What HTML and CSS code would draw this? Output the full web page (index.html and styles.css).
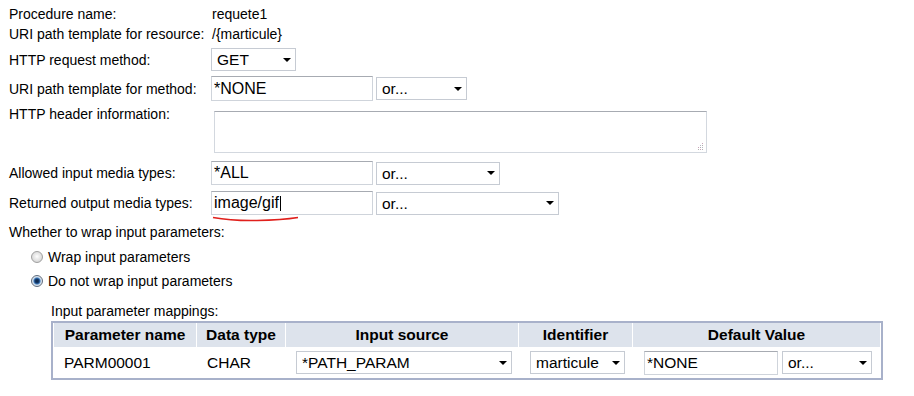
FILE: index.html
```html
<!DOCTYPE html>
<html>
<head>
<meta charset="utf-8">
<link rel="stylesheet" href="styles.css">
</head>
<body>
<div class="page">
  <div class="row r1"><span class="label">Procedure name:</span><span class="val">requete1</span></div>
  <div class="row r2"><span class="label">URI path template for resource:</span><span class="val">/{marticule}</span></div>
  <div class="row r3"><span class="label">HTTP request method:</span><span class="sel s-get"><select><option>GET</option></select></span></div>
  <div class="row r4"><span class="label">URI path template for method:</span><input class="inp" value="*NONE"><span class="sel s-or1"><select><option>or...</option></select></span></div>
  <div class="row r5"><span class="label lt">HTTP header information:</span><span class="tawrap"><textarea class="ta"></textarea><svg class="grip" width="7" height="7" viewBox="0 0 7 7"><rect x="5" y="0" width="1" height="1" fill="#c9a3b8"/><rect x="3" y="2" width="1" height="1" fill="#b8b8c8"/><rect x="5" y="2" width="1" height="1" fill="#b0b0b0"/><rect x="1" y="4" width="1" height="1" fill="#c9a3b8"/><rect x="3" y="4" width="1" height="1" fill="#b0b0b0"/><rect x="5" y="4" width="1" height="1" fill="#b8b8c8"/><rect x="1" y="6" width="1" height="1" fill="#b0b0b0"/><rect x="3" y="6" width="1" height="1" fill="#c9a3b8"/><rect x="5" y="6" width="1" height="1" fill="#b0b0b0"/></svg></span></div>
  <div class="row r6"><span class="label">Allowed input media types:</span><input class="inp" value="*ALL"><span class="sel s-or2"><select><option>or...</option></select></span></div>
  <div class="row r7"><span class="label">Returned output media types:</span><span class="spell"><input class="inp" value="image/gif"><span class="caret"></span><svg class="squiggle" width="90" height="6" viewBox="0 0 90 6"><path d="M1 1.5 Q 20 5 45 4.5 T 86 1.5" fill="none" stroke="#e0201c" stroke-width="1.6"/></svg></span><span class="sel s-or3"><select><option>or...</option></select></span></div>
  <div class="row r8"><span>Whether to wrap input parameters:</span></div>
  <div class="row r9 opt"><span class="radio"></span><span>Wrap input parameters</span></div>
  <div class="row r10 opt"><span class="radio checked"></span><span>Do not wrap input parameters</span></div>
  <div class="mapping">
    <div class="mlabel">Input parameter mappings:</div>
    <div class="ptable">
      <div class="th">Parameter name</div>
      <div class="th">Data type</div>
      <div class="th">Input source</div>
      <div class="th">Identifier</div>
      <div class="th">Default Value</div>
      <div class="td">PARM00001</div>
      <div class="td">CHAR</div>
      <div class="td"><span class="sel s-src"><select><option>*PATH_PARAM</option></select></span></div>
      <div class="td"><span class="sel s-id"><select><option>marticule</option></select></span></div>
      <div class="td"><input class="inp i-def" value="*NONE"><span class="sel s-or4"><select><option>or...</option></select></span></div>
    </div>
  </div>
</div>
</body>
</html>
```
FILE: styles.css
```css
html, body {
  margin: 0;
  padding: 0;
  background: #fff;
}
body {
  font-family: "Liberation Sans", Arial, sans-serif;
  font-size: 14px;
  color: #000;
  width: 914px;
  height: 396px;
  overflow: hidden;
}
.page {
  padding: 4px 0 0 9px;
  display: flex;
  flex-direction: column;
}
.row {
  display: flex;
  align-items: center;
  line-height: 16px;
}
.label {
  width: 202px;
  flex: none;
}
.val {
  margin-left: 1px;
}
.r1 { height: 19px; }
.r2 { height: 21px; }
.r3 { height: 31px; }
.r4 { height: 27px; }
.r5 { height: 56px; align-items: flex-start; }
.r6 { height: 30px; }
.r7 { height: 30px; }
.r8 { height: 28px; }
.r9 { height: 22px; }
.r10 { height: 26px; }
.lt { padding-top: 4px; }

.inp {
  box-sizing: border-box;
  width: 162px;
  height: 24px;
  margin: 0;
  padding: 0 2px;
  border: 1px solid #cfd4db;
  border-top-color: #a7abb2;
  border-radius: 0;
  font-family: "Liberation Sans", Arial, sans-serif;
  font-size: 16px;
  color: #000;
  background: #fff;
  outline: none;
}
.r4 .inp { height: 25px; }

.sel {
  position: relative;
  display: inline-block;
  height: 23px;
  flex: none;
}
.sel select {
  -webkit-appearance: none;
  appearance: none;
  box-sizing: border-box;
  width: 100%;
  height: 100%;
  margin: 0;
  padding: 0 0 0 5px;
  border: 1px solid #c6cbd3;
  border-radius: 0;
  background: #fff;
  font-family: "Liberation Sans", Arial, sans-serif;
  font-size: 15.5px;
  color: #000;
  outline: none;
}
.sel::after {
  content: "";
  position: absolute;
  right: 5px;
  top: 50%;
  margin-top: -2px;
  border-left: 4px solid transparent;
  border-right: 4px solid transparent;
  border-top: 4px solid #000;
  pointer-events: none;
}
.s-get { width: 85px; }
.s-or1 { width: 91px; margin-left: 3px; }
.s-or2 { width: 124px; margin-left: 3px; }
.s-or3 { width: 183px; margin-left: 3px; }

.tawrap {
  position: relative;
  display: inline-block;
  margin: 9px 0 0 3px;
  height: 42px;
}
.ta {
  display: block;
  box-sizing: border-box;
  width: 493px;
  height: 42px;
  margin: 0;
  padding: 2px;
  border: 1px solid #d3d8df;
  border-top-color: #a7abb2;
  border-radius: 0;
  font-family: "Liberation Sans", Arial, sans-serif;
  font-size: 15px;
  resize: none;
  outline: none;
}
.grip {
  position: absolute;
  right: 3px;
  bottom: 3px;
}

.spell {
  position: relative;
  display: inline-block;
  height: 24px;
}
.caret {
  position: absolute;
  left: 69px;
  top: 5px;
  width: 1px;
  height: 15px;
  background: #000;
}
.squiggle {
  position: absolute;
  left: 1px;
  top: 25px;
}

.opt {
  padding-left: 22px;
}
.radio {
  box-sizing: border-box;
  width: 12px;
  height: 12px;
  border-radius: 50%;
  margin-right: 5px;
  border: 1px solid #a0a0a0;
  background: radial-gradient(circle at 50% 45%, #ffffff 0, #efefef 2px, #d4d4d4 6px);
  flex: none;
}
.radio.checked {
  border-color: #5f6c7e;
  background: radial-gradient(circle at 50% 50%, #0b2344 0, #143a6a 2px, #3f78b8 3px, #c6dbef 4px, #e8e8e8 5px);
}

.mapping {
  margin: 7px 0 0 42px;
}
.mlabel {
  height: 20px;
  line-height: 20px;
}
.ptable {
  display: grid;
  grid-template-columns: 142px 88px 232px 113px 247px;
  grid-template-rows: 24px 31px;
  column-gap: 1px;
  padding: 0 1px;
  border: 2px solid #a8b1ca;
  width: max-content;
}
.th {
  background: #dde3ec;
  font-weight: bold;
  font-size: 15.5px;
  text-align: center;
  line-height: 24px;
}
.td {
  display: flex;
  align-items: center;
  padding-left: 10px;
  font-size: 15.5px;
}
.td .sel select, .td .inp { font-size: 15.5px; }
.s-src { width: 216px; }
.s-id { width: 95px; margin-left: 1px; }
.i-def { width: 134px; margin-left: 1px; }
.s-or4 { width: 90px; margin-left: 4px; }
```
